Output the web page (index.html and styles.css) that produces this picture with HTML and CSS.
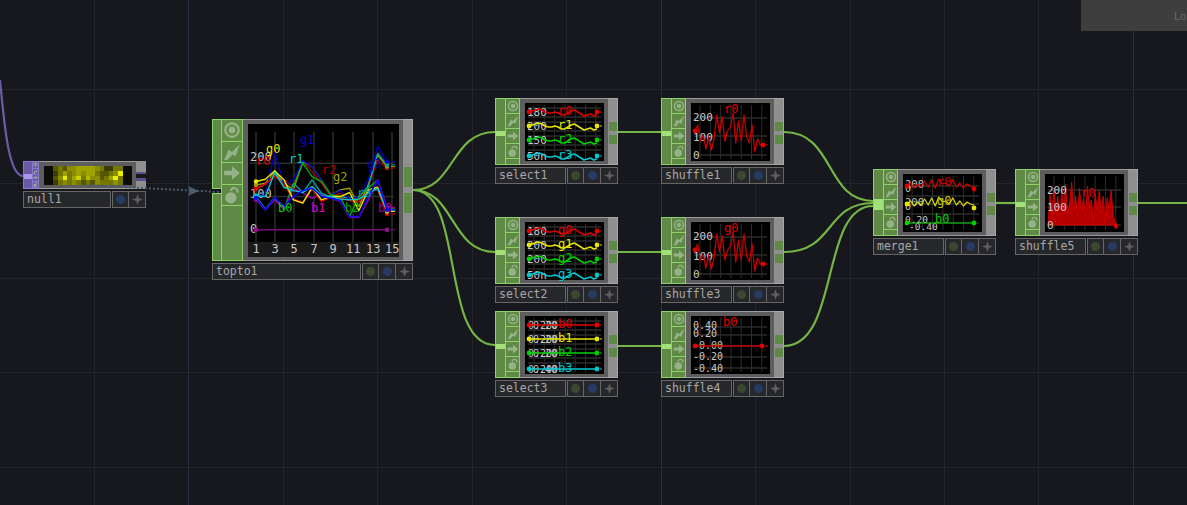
FILE: index.html
```html
<!DOCTYPE html>
<html lang="en">
<head>
  <meta charset="UTF-8">
  <title>Network editor</title>
  <link rel="stylesheet" href="styles.css">
</head>
<body>
  <div class="network" id="network">
    <svg class="grid-lines" id="grid" width="1187" height="505"></svg>
    <svg class="wires" width="1187" height="505">
      <path class="wire wire-null" d="M0 80 C4 120 8 176 23 176"/>
      <path class="wire" d="M413 190 C455 190 450 132 495 132"/>
      <path class="wire" d="M413 190 C455 190 450 252 495 252"/>
      <path class="wire" d="M413 190 C465 190 440 345 495 345"/>
      <path class="wire" d="M618 132 L661 132"/>
      <path class="wire" d="M618 252 L661 252"/>
      <path class="wire" d="M618 346 L661 346"/>
      <path class="wire" d="M784 132 C835 132 825 201 873 201"/>
      <path class="wire" d="M784 252 C835 252 825 203 873 203"/>
      <path class="wire" d="M784 346 C840 346 820 206 873 206"/>
      <path class="wire" d="M996 203 L1015 203"/>
      <path class="wire" d="M1138 203 L1187 203"/>
    </svg>
    <svg class="wires links-over" width="1187" height="505">
      <path class="wire wire-link" d="M85 185 L220 192"/>
      <path class="link-arrow" d="M188 186 L199 191 L188 196 L190 191 Z"/>
    </svg>
    <div class="corner-panel"><span class="corner-text">Lo</span></div>
  </div>
  <script src="network.js"></script>
</body>
</html>
```
FILE: styles.css
```css
body {
  margin: 0;
  background-color: #16181d;
  overflow: hidden;
}
.network {
  position: relative;
  width: 1187px;
  height: 505px;
  overflow: hidden;
  font-family: "DejaVu Sans Mono", "Liberation Mono", monospace;
}
.grid-lines, .wires {
  position: absolute;
  left: 0;
  top: 0;
}
.links-over {
  z-index: 5;
}
.grid-line {
  stroke: #23252b;
  stroke-width: 1;
}
.grid-line.major {
  stroke: #2b2c40;
}
.wire {
  fill: none;
  stroke: #75b545;
  stroke-width: 2.2;
}
.wire-null {
  stroke: #6b5ba8;
}
.wire-link {
  stroke: #4a5a68;
  stroke-width: 2;
  stroke-dasharray: 2 2;
}
.link-arrow {
  fill: #4d5f6e;
}
.corner-panel {
  position: absolute;
  left: 1081px;
  top: 0;
  width: 106px;
  height: 31px;
  background-color: #3e3e3e;
}
.corner-text {
  position: absolute;
  left: 93px;
  top: 10px;
  font: 11px "Liberation Sans", sans-serif;
  color: #666;
}

/* operator node */
.node {
  position: absolute;
  width: 123px;
}
.node.large {
  width: 201px;
}
.op {
  display: flex;
  height: 67px;
  box-sizing: border-box;
}
.node.large .op {
  height: 142px;
}
.node.slim .op {
  height: 28px;
}
.in-strip {
  position: relative;
  width: 10px;
  box-sizing: border-box;
  background-color: #5f8a45;
  border: 1px solid #8fd26b;
  border-right: none;
}
.large .in-strip {
  width: 9px;
}
.in-port {
  position: absolute;
  left: 0;
  right: 0;
  background-color: #a2e07a;
}
.in-port.notch {
  left: -1px;
  box-sizing: content-box;
  background-color: #101114;
  border-top: 1px solid #8fd26b;
  border-bottom: 1px solid #8fd26b;
}
.icon-col {
  display: flex;
  flex-direction: column;
  width: 15px;
  box-sizing: border-box;
  background-color: #5f8a45;
  border: 1px solid #8fd26b;
}
.large .icon-col {
  width: 22px;
}
.cell {
  flex: 0 0 15px;
  box-sizing: border-box;
  display: flex;
  align-items: center;
  justify-content: center;
  border-bottom: 1px solid #8fd26b;
}
.large .cell {
  flex-basis: 21.5px;
}
.cell svg {
  width: 12px;
  height: 12px;
  fill: #96b288;
}
.large .cell svg {
  width: 18px;
  height: 18px;
}
.frame {
  flex: 1;
  padding: 4px 4px 3px 5px;
  box-sizing: border-box;
  background-color: #5d5d5d;
  border-top: 1px solid #9a9a9a;
  border-bottom: 1px solid #9a9a9a;
}
.viewer {
  display: block;
  width: 100%;
  height: 100%;
  background-color: #000;
  overflow: visible;
  font-family: "DejaVu Sans Mono", monospace;
}
.viewer polyline {
  stroke-linejoin: round;
}
.out-strip {
  width: 10px;
  box-sizing: border-box;
  padding-top: 23px;
  background-color: #8f8f8f;
  border: 1px solid #a8a8a8;
  border-left: none;
}
.out-port {
  height: 9px;
  margin-left: 1px;
  margin-bottom: 4px;
  width: 8px;
  background-color: #5f8a45;
}
.large .out-strip {
  padding-top: 47px;
}
.large .out-port {
  height: 20px;
  margin-bottom: 6px;
}

/* purple null node */
.slim .in-strip {
  background-color: #6a58a8;
  border-color: #8a78d0;
  width: 9px;
}
.slim .in-port {
  background-color: #a999e8;
}
.slim .icon-col {
  width: 7px;
  background-color: #6a58a8;
  border-color: #8a78d0;
}
.slim .cell {
  flex-basis: 6.5px;
  border-color: #8a78d0;
}
.slim .cell svg {
  width: 5px;
  height: 5px;
}
.slim .out-strip {
  padding: 11px 0 0;
  border: none;
  background-color: #8f8f8f;
}
.slim .out-port {
  width: 10px;
  margin: 0;
  background-color: #5d4f8f;
}
.slim .out-port:first-child {
  height: 2px;
  border-bottom: 4px solid #16181d;
}
.slim .out-port:last-child {
  height: 3px;
}

/* name row under the node */
.label-row {
  display: flex;
  margin-top: 2px;
  height: 17px;
}
.node-name {
  flex: 1;
  padding-left: 3px;
  box-sizing: border-box;
  font-size: 11.5px;
  line-height: 15px;
  color: #a8a8a8;
  background-color: #26272a;
  border: 1px solid #666;
}
.flag {
  display: flex;
  align-items: center;
  justify-content: center;
  width: 17px;
  box-sizing: border-box;
  background-color: #26272a;
  border: 1px solid #666;
  border-left: none;
}
.node-name + .flag {
  margin-left: 1px;
  border-left: 1px solid #666;
}
.dot {
  width: 9px;
  height: 9px;
  border-radius: 50%;
}
.dot.green {
  background-color: #39482f;
}
.dot.blue {
  background-color: #263a62;
}
.flag svg {
  width: 11px;
  height: 11px;
  fill: #5e5e5e;
}
```
FILE: network.js
```js
// Node table and the little viewer charts
var RED = '#e00000', YEL = '#e6e600', GRN = '#00d000', CYA = '#00c8d0', NUM = '#c8c8c8';

var ICONS = [
  '<svg viewBox="0 0 16 16"><path fill-rule="evenodd" d="M8 1a7 7 0 1 0 0 14A7 7 0 0 0 8 1zm0 2a5 5 0 1 1 0 10A5 5 0 0 1 8 3zm0 2a3 3 0 1 0 0 6 3 3 0 0 0 0-6z"/></svg>',
  '<svg viewBox="0 0 16 16"><path d="M1 15 L5 6 L8 8 L15 1 L11 12 L8.5 10 L4 15 Z"/></svg>',
  '<svg viewBox="0 0 16 16"><path d="M1 6 H8 V2 L15 8 L8 14 V10 H1 Z"/></svg>',
  '<svg viewBox="0 0 16 16"><path fill-rule="evenodd" d="M10 1a4 4 0 0 0-4 3.5h2A2 2 0 0 1 12 5v1h2V5a4 4 0 0 0-4-4z"/><circle cx="7" cy="10.5" r="5"/></svg>'
];
var STAR = '<svg viewBox="0 0 16 16"><path d="M8 0 L10 6 L16 8 L10 10 L8 16 L6 10 L0 8 L6 6 Z"/></svg>';

function line(pts, color, w) {
  return '<polyline fill="none" stroke="' + color + '" stroke-width="' + (w || 1) + '" points="' + pts.map(function(p) { return p[0] + ',' + p[1]; }).join(' ') + '"/>';
}
function dot(x, y, color, r) {
  return '<circle cx="' + x + '" cy="' + y + '" r="' + (r || 2.4) + '" fill="' + color + '"/>';
}
function txt(x, y, s, color, size) {
  return '<text x="' + x + '" y="' + y + '" fill="' + color + '" font-size="' + size + '">' + s + '</text>';
}
function smallGrid(w, h, rows) {
  var out = '';
  for (var x = 9; x < w - 2; x += 10.3) out += line([[x, 2], [x, h - 2]], '#2c2c2c');
  rows.forEach(function(y) { out += line([[3, y], [w - 3, y]], '#2c2c2c', 1.5); });
  return out;
}
function trace(vals, x0, x1, base, scale) {
  var step = (x1 - x0) / (vals.length - 1);
  return vals.map(function(v, i) { return [+(x0 + i * step).toFixed(1), +(base + v * scale).toFixed(1)]; });
}

var WAVE = [0, -1, -2, -3, -2, 0, 1, 1, 0, 1, 3, 3, 1, -1, -2, 0, 2, 4, 3, 2, 4, 3];

function selectChart(names, lefts, flat) {
  var rows = [9, 23, 37, 53], cols = [RED, YEL, GRN, CYA], out = smallGrid(79, 58, [5, 14, 19, 28, 33, 42, 47]);
  rows.forEach(function(y, i) {
    out += txt(2, y + 4, lefts[i], NUM, flat ? 10 : 11);
    if (flat) out += txt(3, y + 4, '0.200', NUM, 10);
    out += line(trace(flat ? [0, 0] : WAVE, 4, 72, y, 1), cols[i], 1.5);
    out += dot(4, y, cols[i]) + dot(72, y, cols[i]);
    out += line([[75, y], [77, y]], cols[i]);
    out += txt(33, y + 3, names[i], cols[i], 12);
  });
  return out;
}

var NOISE = [28, 22, 38, 32, 46, 34, 47, 36, 12, 30, 14, 38, 28, 24, 10, 40, 18, 38, 12, 34, 40, 22, 49, 36, 42, 42];

function shuffleChart(name) {
  var out = smallGrid(79, 58, [15, 33, 52]);
  out += txt(2, 18, '200', NUM, 11) + txt(2, 38, '100', NUM, 11) + txt(2, 56, '0', NUM, 11);
  out += line(trace(NOISE, 4, 72, 0, 1), '#c40000', 1.3);
  out += dot(4, 28, RED) + dot(72, 42, RED) + line([[75, 42], [77, 42]], RED);
  out += txt(33, 10, name, RED, 12);
  return out;
}

function flatChart() {
  var out = smallGrid(79, 58, [11, 19, 30, 41, 52]);
  [['0.40', 13], ['0.20', 21], ['-0.00', 33], ['-0.20', 44], ['-0.40', 56]].forEach(function(t) {
    out += txt(2, t[1], t[0], NUM, 10);
  });
  out += line([[4, 30], [71, 30]], '#c00000', 1.5) + dot(4, 30, RED) + dot(71, 30, RED);
  out += line([[75, 30], [77, 30]], RED);
  out += txt(32, 10, 'b0', RED, 12);
  return out;
}

function mergeChart() {
  var out = smallGrid(79, 58, [12, 22, 30, 40, 49]);
  var jag = [0, -3, 2, -2, 1, -5, 1, -6, 2, -7, -2, -3, 0, -6, 1, -3, 2, -2, 0, 1];
  out += txt(2, 14, '200', NUM, 10.5) + txt(2, 18, '0', NUM, 10);
  out += line(trace(jag, 4, 71, 12, 1), '#d80000', 1.2) + dot(4, 12, RED) + dot(71, 15, RED);
  out += txt(34, 12, 'r0', '#c80000', 12);
  out += txt(2, 32, '200', NUM, 10.5) + txt(2, 36, '0', NUM, 10);
  out += line(trace(jag, 4, 71, 30, 1), '#d8d800', 1.2) + dot(4, 30, YEL) + dot(71, 34, YEL);
  out += txt(34, 31, 'g0', '#c8c800', 12);
  out += txt(2, 49, '0.20', NUM, 9.5) + txt(6, 56, '-0.40', NUM, 9.5);
  out += line([[4, 49], [71, 49]], GRN) + dot(4, 49, GRN) + dot(71, 49, GRN);
  out += txt(32, 49, 'b0', GRN, 12);
  return out;
}

function fillChart() {
  var out = smallGrid(79, 58, [16, 33, 51]);
  var ys = [51, 20, 40, 14, 38, 22, 44, 16, 36, 10, 40, 28, 8, 38, 22, 42, 14, 36, 24, 44, 12, 34, 26, 46, 20, 36, 16, 40, 22, 48, 24, 34, 16, 40, 48, 51];
  var pts = trace(ys, 3, 72, 0, 1);
  out += '<polygon fill="#b40000" stroke="#e00000" stroke-width="0.8" points="' + pts.map(function(p) { return p.join(','); }).join(' ') + '"/>';
  out += txt(36, 23, 'r0', RED, 12);
  out += txt(2, 20, '200', NUM, 11) + txt(2, 37, '100', NUM, 11) + txt(2, 55, '0', NUM, 11);
  out += dot(71, 52, RED);
  return out;
}

var TOP_SERIES = [
  ['#a00000', [128, 135, 160, 150, 130, 205, 175, 140, 100, 110, 90, 90, 130, 210, 185]],
  ['#a0a000', [135, 140, 175, 140, 120, 205, 190, 150, 105, 120, 125, 70, 135, 225, 190]],
  ['#00a0a0', [100, 62, 98, 60, 140, 112, 150, 110, 98, 100, 95, 100, 130, 230, 195]],
  ['#0000c0', [100, 105, 232, 135, 150, 208, 190, 150, 105, 118, 92, 100, 150, 250, 205]],
  ['#00b000', [95, 60, 95, 60, 130, 200, 160, 145, 105, 100, 40, 100, 125, 150, 65]],
  ['#a000a0', [90, 60, 90, 62, 125, 110, 95, 105, 95, 85, 38, 38, 90, 150, 68]],
  [RED, [122, 138, 162, 135, 92, 82, 122, 85, 98, 96, 88, 84, 118, 120, 48]],
  [YEL, [145, 152, 178, 150, 90, 80, 128, 90, 100, 100, 112, 58, 120, 128, 55]],
  ['#00c8d0', [102, 100, 172, 128, 118, 112, 130, 102, 100, 92, 90, 92, 110, 125, 58]],
  ['#0000ff', [96, 60, 97, 70, 100, 118, 125, 100, 95, 88, 40, 40, 100, 150, 60]]
];

function topChart() {
  var xs = [8, 27, 46, 66, 85, 105, 125, 144], out = '';
  xs.forEach(function(x) { out += line([[x, 8], [x, 117]], '#2c2c2c', 1.5); });
  out += line([[2, 39], [146, 39]], '#2c2c2c', 1.5) + line([[2, 72], [146, 72]], '#2c2c2c', 1.5);
  out += '<rect x="0" y="117" width="151" height="15" fill="#1a1a1a"/>';
  out += txt(2, 37, '200', NUM, 12) + txt(2, 73, '100', NUM, 12) + txt(2, 108, '0', NUM, 12);
  TOP_SERIES.forEach(function(s) {
    var pts = trace(s[1], 8, 139, 105, -0.33);
    out += line(pts, s[0], 1.4) + dot(8, pts[0][1], s[0], 2.2) + dot(139, pts[14][1], s[0], 2.2);
    out += line([[143, pts[14][1]], [147, pts[14][1]]], s[0]);
  });
  out += line([[8, 105], [139, 105]], '#901090', 1.2) + dot(8, 105, '#901090') + dot(139, 105, '#901090');
  out += line([[143, 105], [147, 105]], '#901090');
  [[18, 29, 'g0', YEL], [8, 41, 'r0', RED], [52, 20, 'g1', '#0000e0'], [41, 39, 'r1', '#00d0d0'],
   [74, 50, 'r2', '#b00000'], [85, 57, 'g2', '#a0a000'], [30, 87, 'b0', '#00d000'], [63, 87, 'b1', '#e000e0'],
   [97, 87, 'b2', '#00a000'], [109, 72, 'r3', '#00a0a0'], [119, 44, 'g3', '#0000b0'], [130, 87, 'b3', '#a000a0']
  ].forEach(function(l) { out += txt(l[0], l[1], l[2], l[3], 12); });
  [1, 3, 5, 7, 9, 11, 13, 15].forEach(function(n, i) {
    out += txt(xs[i] - (n > 9 ? 7 : 3.5), 128, n, NUM, 12);
  });
  return out;
}

function pixelChart() {
  var rows = ['0034355666654224400', '0024645656643345900', '0035946847553469400', '0024545434354445400'];
  var shade = ['#0c0c0a', '#2c2c00', '#3c3e00', '#565800', '#747800', '#8a8e00', '#a0a400', '#b4b800', '#ccd000', '#eaf000'];
  var out = '';
  rows.forEach(function(r, y) {
    r.split('').forEach(function(v, x) {
      out += '<rect x="' + x + '" y="' + y + '" width="1" height="1" fill="' + shade[+v] + '"/>';
    });
  });
  return out;
}

var NODES = [
  { name: 'null1', x: 23, y: 161, cls: 'slim', box: '0 0 19 4', chart: pixelChart(), port: [12, 5], flags: 2 },
  { name: 'topto1', x: 212, y: 119, cls: 'large', box: '0 0 151 132', chart: topChart(), notch: 68 },
  { name: 'select1', x: 495, y: 98, box: '0 0 79 58', chart: selectChart(['r0', 'r1', 'r2', 'r3'], ['180', '200', '150', '50n']), port: [32, 5] },
  { name: 'shuffle1', x: 661, y: 98, box: '0 0 79 58', chart: shuffleChart('r0'), port: [32, 5] },
  { name: 'select2', x: 495, y: 217, box: '0 0 79 58', chart: selectChart(['g0', 'g1', 'g2', 'g3'], ['180', '200', '200', '50n']), port: [32, 5] },
  { name: 'shuffle3', x: 661, y: 217, box: '0 0 79 58', chart: shuffleChart('g0'), port: [32, 5] },
  { name: 'select3', x: 495, y: 311, box: '0 0 79 58', chart: selectChart(['b0', 'b1', 'b2', 'b3'], ['-0.20', '-0.20', '-0.20', '-0.40'], true), port: [32, 5] },
  { name: 'shuffle4', x: 661, y: 311, box: '0 0 79 58', chart: flatChart(), port: [32, 5] },
  { name: 'merge1', x: 873, y: 169, box: '0 0 79 58', chart: mergeChart(), port: [29, 11] },
  { name: 'shuffle5', x: 1015, y: 169, box: '0 0 79 58', chart: fillChart(), port: [32, 5] }
];

function buildNode(n) {
  var el = document.createElement('div');
  el.className = 'node ' + (n.cls || '');
  el.style.left = n.x + 'px';
  el.style.top = n.y + 'px';
  var port = '';
  if (n.port) port = '<div class="in-port" style="top:' + n.port[0] + 'px;height:' + n.port[1] + 'px"></div>';
  if (n.notch) port = '<div class="in-port notch" style="top:' + n.notch + 'px;height:4px"></div>';
  var cells = ICONS.map(function(i) { return '<div class="cell">' + i + '</div>'; }).join('');
  var flags = '';
  if (n.flags !== 2) flags += '<div class="flag"><span class="dot green"></span></div>';
  flags += '<div class="flag"><span class="dot blue"></span></div><div class="flag">' + STAR + '</div>';
  el.innerHTML =
    '<div class="op">' +
      '<div class="in-strip">' + port + '</div>' +
      '<div class="icon-col">' + cells + '</div>' +
      '<div class="frame"><svg class="viewer" viewBox="' + n.box + '" preserveAspectRatio="none" shape-rendering="' + (n.cls === 'slim' ? 'crispEdges' : 'auto') + '">' + n.chart + '</svg></div>' +
      '<div class="out-strip"><div class="out-port"></div><div class="out-port"></div></div>' +
    '</div>' +
    '<div class="label-row"><div class="node-name">' + n.name + '</div>' + flags + '</div>';
  return el;
}

var net = document.getElementById('network');
NODES.forEach(function(n) { net.appendChild(buildNode(n)); });

// background grid, every 94.45px
var g = '';
for (var i = 1; i * 94.45 < 1187; i++) {
  var x = Math.floor(i * 94.45);
  g += '<line class="grid-line' + (i % 5 === 2 ? ' major' : '') + '" x1="' + (x + 0.5) + '" y1="0" x2="' + (x + 0.5) + '" y2="505"/>';
}
[89, 183, 278, 372, 467].forEach(function(y) {
  g += '<line class="grid-line" x1="0" y1="' + (y + 0.5) + '" x2="1187" y2="' + (y + 0.5) + '"/>';
});
document.getElementById('grid').innerHTML = g;
```
